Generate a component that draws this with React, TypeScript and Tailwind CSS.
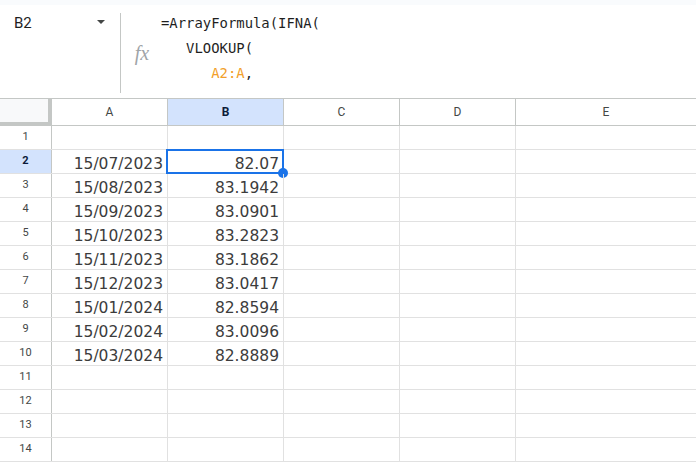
import React from 'react'

const cols = ['A', 'B', 'C', 'D', 'E']

const data: [string, string][] = [
    ['', ''],
    ['15/07/2023', '82.07'],
    ['15/08/2023', '83.1942'],
    ['15/09/2023', '83.0901'],
    ['15/10/2023', '83.2823'],
    ['15/11/2023', '83.1862'],
    ['15/12/2023', '83.0417'],
    ['15/01/2024', '82.8594'],
    ['15/02/2024', '83.0096'],
    ['15/03/2024', '82.8889'],
    ['', ''],
    ['', ''],
    ['', ''],
    ['', ''],
]

const mono = { fontFamily: '"DejaVu Sans Mono", "Liberation Mono", monospace' }

function FormulaBar() {
    return (
        <div className="h-[98px] flex flex-col bg-white">
            <div className="h-[5px] bg-[#f9fbfd]"></div>
            <div className="flex flex-1 overflow-hidden">
                {/* Name box */}
                <div className="w-[120px] flex items-start justify-between pl-[14px] pr-[15px] pt-[9px]">
                    <span className="text-[15px] leading-[18px] text-[#1f1f1f] font-['Roboto',sans-serif]">B2</span>
                    <span className="mt-[6px] w-0 h-0 border-l-[4px] border-r-[4px] border-t-[4px] border-l-transparent border-r-transparent border-t-[#444746]"></span>
                </div>
                <div className="w-px bg-[#c4c7c5] mt-[8px] mb-[5px]"></div>
                {/* fx */}
                <div className="w-[40px] flex items-center justify-center">
                    <span className="text-[20px] italic text-[#a0a4a8] font-['Liberation_Serif',serif] mt-[2px] ml-[2px]">fx</span>
                </div>
                {/* Formula */}
                <div className="flex-1 pt-[6px] text-[13.9px] leading-[25px] text-[#1f1f1f] whitespace-pre" style={mono}>
                    <div>=ArrayFormula(IFNA(</div>
                    <div>{'   '}VLOOKUP(</div>
                    <div className="text-[#f29f2b]">{'      '}A2:A<span className="text-[#1f1f1f]">,</span></div>
                </div>
            </div>
        </div>
    )
}

export default function App() {
    return (
        <div className="w-[696px] h-[464px] overflow-hidden bg-white font-['Roboto',sans-serif]">
            <FormulaBar />

            {/* Column headers */}
            <div className="flex h-[28px] border-t border-b border-[#c4c7c5]">
                <div className="w-[52px] shrink-0 bg-[#f8f9fa] border-r-[4px] border-b-[4px] border-[#c4c7c5] -mb-px"></div>
                {cols.map((c) => (
                    <div
                        key={c}
                        className={
                            c === 'E'
                                ? 'flex-1 flex items-center justify-center text-[12px] text-[#444746]'
                                : c === 'B'
                                ? 'w-[116px] shrink-0 flex items-center justify-center border-r border-[#c4c7c5] bg-[#d3e3fd] text-[12px] font-bold text-[#0b1b3a]'
                                : 'w-[116px] shrink-0 flex items-center justify-center border-r border-[#c4c7c5] text-[12px] text-[#444746]'
                        }
                    >
                        {c}
                    </div>
                ))}
            </div>

            {/* Rows */}
            {data.map(([a, b], i) => {
                const sel = i === 1
                return (
                    <div key={i} className="flex h-[24px] border-b border-[#e1e1e1]">
                        <div
                            className={
                                sel
                                    ? 'w-[52px] shrink-0 flex items-center justify-center border-r border-[#c4c7c5] bg-[#d3e3fd] text-[11px] font-bold text-[#0b1b3a]'
                                    : 'w-[52px] shrink-0 flex items-center justify-center border-r border-[#c4c7c5] text-[11px] text-[#444746]'
                            }
                        >
                            {i + 1}
                        </div>
                        <div className="w-[116px] shrink-0 border-r border-[#e1e1e1] pr-[4px] pt-[4px] text-right text-[15.5px] leading-[20px] text-[#3c3c3c] font-['DejaVu_Sans',sans-serif]">
                            {a}
                        </div>
                        <div className="relative w-[116px] shrink-0 border-r border-[#e1e1e1] pr-[4px] pt-[4px] text-right text-[15.5px] leading-[20px] text-[#3c3c3c] font-['DejaVu_Sans',sans-serif]">
                            {b}
                            {sel && (
                                <>
                                    <div className="absolute -left-[2px] -top-px -right-px -bottom-px border-2 border-[#1a73e8]"></div>
                                    <div className="absolute -right-[5px] -bottom-[5px] w-[10px] h-[10px] rounded-full bg-[#1a73e8]"></div>
                                </>
                            )}
                        </div>
                        <div className="w-[116px] shrink-0 border-r border-[#e1e1e1]"></div>
                        <div className="w-[116px] shrink-0 border-r border-[#e1e1e1]"></div>
                        <div className="flex-1"></div>
                    </div>
                )
            })}
        </div>
    )
}
